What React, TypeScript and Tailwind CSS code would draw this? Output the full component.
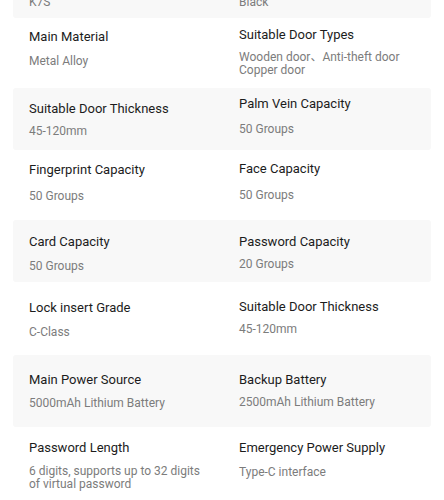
type Cell = {
  label: string;
  value: string;
  pad: string;
  gap: string;
  lines?: string;
};

type Row = {
  h: string;
  shaded: boolean;
  cells: [Cell, Cell];
};

// spec rows, top one is partly scrolled out of view
const rows: Row[] = [
  {
    h: 'h-[62px]',
    shaded: true,
    cells: [
      { label: 'Model', value: 'K7S', pad: 'pt-[14px]', gap: 'mt-[9px]' },
      { label: 'Color', value: 'Black', pad: 'pt-[14px]', gap: 'mt-[9px]' },
    ],
  },
  {
    h: 'h-[70px]',
    shaded: false,
    cells: [
      { label: 'Main Material', value: 'Metal Alloy', pad: 'pt-[11px]', gap: 'mt-[9px]' },
      {
        label: 'Suitable Door Types',
        value: 'Wooden door、Anti-theft door Copper door',
        pad: 'pt-[9px]',
        gap: 'mt-[8px]',
        lines: 'leading-[12.5px]',
      },
    ],
  },
  {
    h: 'h-[62px]',
    shaded: true,
    cells: [
      { label: 'Suitable Door Thickness', value: '45-120mm', pad: 'pt-[13px]', gap: 'mt-[7px]' },
      { label: 'Palm Vein Capacity', value: '50 Groups', pad: 'pt-[8px]', gap: 'mt-[10px]' },
    ],
  },
  {
    h: 'h-[70px]',
    shaded: false,
    cells: [
      { label: 'Fingerprint Capacity', value: '50 Groups', pad: 'pt-[12px]', gap: 'mt-[11px]' },
      { label: 'Face Capacity', value: '50 Groups', pad: 'pt-[11px]', gap: 'mt-[11px]' },
    ],
  },
  {
    h: 'h-[62px]',
    shaded: true,
    cells: [
      { label: 'Card Capacity', value: '50 Groups', pad: 'pt-[14px]', gap: 'mt-[9px]' },
      { label: 'Password Capacity', value: '20 Groups', pad: 'pt-[14px]', gap: 'mt-[7px]' },
    ],
  },
  {
    h: 'h-[73px]',
    shaded: false,
    cells: [
      { label: 'Lock insert Grade', value: 'C-Class', pad: 'pt-[18px]', gap: 'mt-[9px]' },
      { label: 'Suitable Door Thickness', value: '45-120mm', pad: 'pt-[17px]', gap: 'mt-[7px]' },
    ],
  },
  {
    h: 'h-[72px]',
    shaded: true,
    cells: [
      { label: 'Main Power Source', value: '5000mAh Lithium Battery', pad: 'pt-[17px]', gap: 'mt-[8px]' },
      { label: 'Backup Battery', value: '2500mAh Lithium Battery', pad: 'pt-[17px]', gap: 'mt-[7px]' },
    ],
  },
  {
    h: 'h-[80px]',
    shaded: false,
    cells: [
      {
        label: 'Password Length',
        value: '6 digits, supports up to 32 digits of virtual password',
        pad: 'pt-[13px]',
        gap: 'mt-[9px]',
        lines: 'leading-[13px]',
      },
      { label: 'Emergency Power Supply', value: 'Type-C interface', pad: 'pt-[13px]', gap: 'mt-[9px]' },
    ],
  },
];

function SpecCell({ cell, side }: { cell: Cell; side: 'left' | 'right' }) {
  return (
    <div className={`${cell.pad} ${side === 'left' ? 'pl-4 pr-4' : 'pl-[17px] pr-4'}`}>
      <div className="text-[13px] leading-4 font-normal text-[#1c1c1c]">{cell.label}</div>
      <div className={`${cell.gap} text-[12px] ${cell.lines ?? 'leading-[14px]'} text-[#7c7c7c]`}>
        {cell.value}
      </div>
    </div>
  );
}

export default function App() {
  return (
    <div
      className="h-[500px] w-[444px] overflow-hidden bg-white"
      style={{ fontFamily: 'Roboto, "Noto Sans CJK SC", sans-serif' }}
    >
      <div className="-mt-[44px] px-[13px]">
        {rows.map((row, i) => (
          <div
            key={i}
            className={`grid grid-cols-2 ${row.h} ${row.shaded ? 'rounded-[3px] bg-[#f8f8f8]' : 'bg-white'}`}
          >
            <SpecCell cell={row.cells[0]} side="left" />
            <SpecCell cell={row.cells[1]} side="right" />
          </div>
        ))}
      </div>
    </div>
  );
}
